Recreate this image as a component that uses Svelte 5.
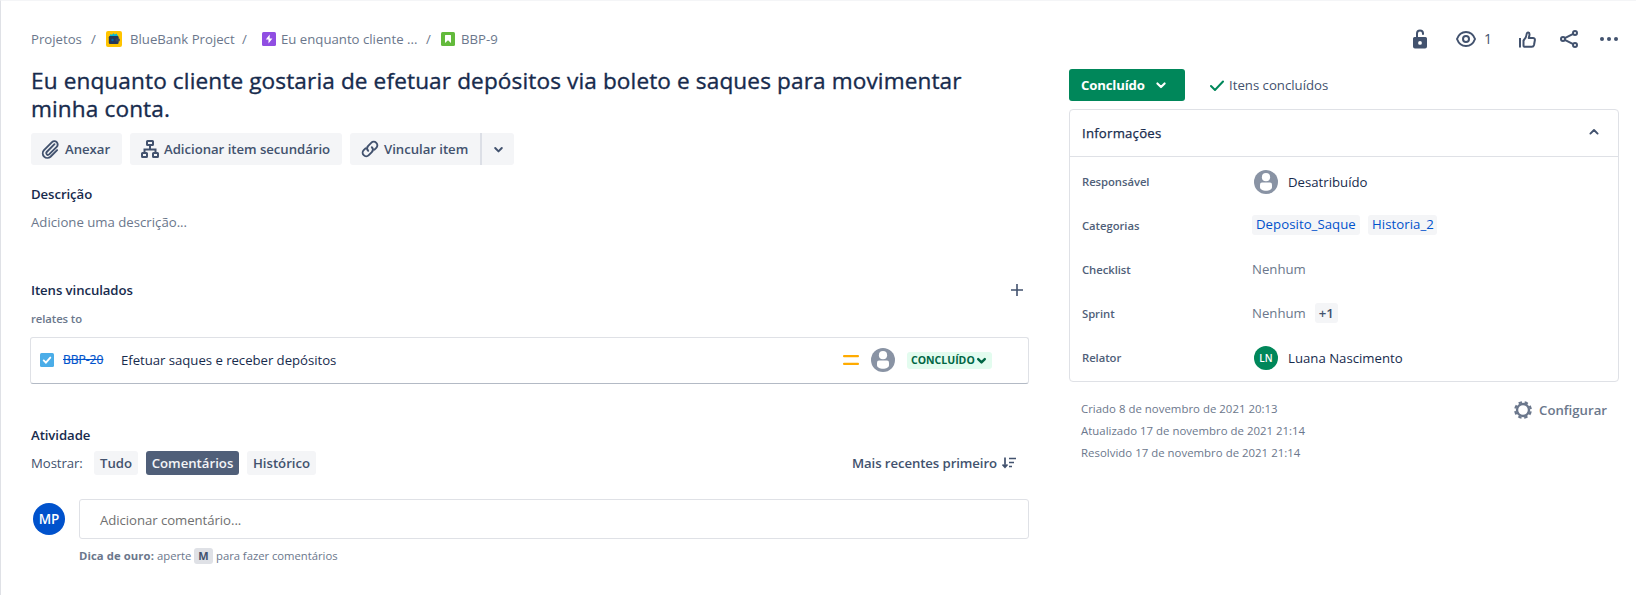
<script>
  const crumbs = ['Projetos', 'BlueBank Project', 'Eu enquanto cliente ...', 'BBP-9'];
  const dates = [
    'Criado 8 de novembro de 2021 20:13',
    'Atualizado 17 de novembro de 2021 21:14',
    'Resolvido 17 de novembro de 2021 21:14'
  ];
</script>

{#snippet person()}
  <svg class="person" width="24" height="24" viewBox="0 0 24 24">
    <circle cx="12" cy="12" r="12" fill="#8993a4" />
    <circle cx="12" cy="7.2" r="4.1" fill="#fff" />
    <path d="M8 12.500h8a2 2 0 0 1 2 2V17c0 2.600-2.800 3.800-6 3.800S6 19.600 6 17v-2.500a2 2 0 0 1 2-2z" fill="#fff" />
  </svg>
{/snippet}

{#snippet chevron(size, weight)}
  <svg width={size} height={size} viewBox="0 0 10 10" fill="none" stroke="currentColor" stroke-width={weight} stroke-linecap="round" stroke-linejoin="round">
    <path d="M2 3.700l3 3 3-3" />
  </svg>
{/snippet}

<div class="page">
  <main class="main">
    <nav class="crumbs">
      <span class="c1">{crumbs[0]}</span>
      <i class="s1">/</i>
      <svg width="16" height="16" viewBox="0 0 16 16">
        <rect width="16" height="16" rx="2" fill="#ffc400" />
        <path d="M3.500 5.500L4.500 3l1.500.8L7.500 2.200l1.300 1.300 1.700-1 1.800 3z" fill="#00b8d9" />
        <rect x="2.800" y="5" width="9.800" height="8" rx="1.200" fill="#253858" />
        <rect x="9.500" y="7.500" width="4.300" height="3" rx="1" fill="#344563" />
        <circle cx="6.500" cy="9" r="1.200" fill="#0065a8" />
      </svg>
      <span class="c2">{crumbs[1]}</span>
      <i class="s2">/</i>
      <svg width="14" height="14" viewBox="0 0 14 14">
        <rect width="14" height="14" rx="1.500" fill="#904ee2" />
        <path d="M7.700 2.600L3.800 7.600h2.700v3.800l3.900-5H7.700z" fill="#fff" />
      </svg>
      <span class="c3">{crumbs[2]}</span>
      <i class="s3">/</i>
      <svg width="14" height="14" viewBox="0 0 14 14">
        <rect width="14" height="14" rx="1.500" fill="#63ba3c" />
        <path d="M4.500 3h5a.5.5 0 0 1 .5.5V11L7 8.200 4 11V3.500a.5.5 0 0 1 .5-.5z" fill="#fff" />
      </svg>
      <span class="c4">{crumbs[3]}</span>
    </nav>

    <h1>Eu enquanto cliente gostaria de efetuar depósitos via boleto e saques para movimentar minha conta.</h1>

    <div class="actions">
      <button class="act a1">
        <svg width="18" height="20" viewBox="0 0 18 20" fill="none" stroke="currentColor" stroke-width="1.900" stroke-linecap="round">
          <path d="M13.500 5.200L5.700 13a1.700 1.700 0 0 0 2.400 2.400l7.600-7.600a3.300 3.300 0 0 0-4.700-4.700L3 11.200a4.600 4.600 0 0 0 6.500 6.500l6.600-6.600" />
        </svg>
        <span>Anexar</span>
      </button>
      <button class="act a2">
        <svg width="18" height="18" viewBox="0 0 18 18" fill="none" stroke="currentColor" stroke-width="2">
          <rect x="6" y="1" width="6" height="4" rx=".5" />
          <rect x="1" y="13" width="5" height="4" rx=".5" />
          <rect x="12" y="13" width="5" height="4" rx=".5" />
          <path d="M9 5v4M3.500 13V9.500h11V13" />
        </svg>
        <span>Adicionar item secundário</span>
      </button>
      <div class="split">
        <button class="act a3">
          <svg width="18" height="18" viewBox="0 0 18 18" fill="none" stroke="currentColor" stroke-width="1.900" stroke-linecap="round">
            <path d="M7.200 10.800a3.600 3.600 0 0 1 0-5l3-3a3.600 3.600 0 0 1 5.100 5.100l-1.800 1.800" />
            <path d="M10.800 7.200a3.600 3.600 0 0 1 0 5l-3 3a3.600 3.600 0 0 1-5.100-5.100l1.800-1.800" />
          </svg>
          <span>Vincular item</span>
        </button>
        <button class="act more">{@render chevron(11, 1.8)}</button>
      </div>
    </div>

    <h2 class="desc-h">Descrição</h2>
    <p class="desc">Adicione uma descrição...</p>

    <div class="linked-head">
      <h2>Itens vinculados</h2>
      <svg width="12" height="12" viewBox="0 0 12 12" stroke="#42526e" stroke-width="1.600"><path d="M6 0v12M0 6h12" /></svg>
    </div>
    <p class="rel">relates to</p>

    <div class="card">
      <svg width="14" height="14" viewBox="0 0 14 14">
        <rect width="14" height="14" rx="1.500" fill="#4bade8" />
        <path d="M3.700 7.400l2.200 2.200 4.400-5" fill="none" stroke="#fff" stroke-width="1.900" stroke-linecap="round" />
      </svg>
      <a class="key" href="#bbp-20">BBP-20</a>
      <span class="summary">Efetuar saques e receber depósitos</span>
      <svg width="16" height="10" viewBox="0 0 16 10">
        <rect y="0" width="16" height="2.300" rx="1" fill="#ffab00" />
        <rect y="7.700" width="16" height="2.300" rx="1" fill="#ffab00" />
      </svg>
      {@render person()}
      <span class="lozenge"><b>CONCLUÍDO</b>{@render chevron(11, 2.2)}</span>
    </div>

    <h2 class="act-h">Atividade</h2>
    <div class="filters">
      <span class="show">Mostrar:</span>
      <button class="f1">Tudo</button>
      <button class="f2 on">Comentários</button>
      <button class="f3">Histórico</button>
      <span class="sort">Mais recentes primeiro</span>
      <svg width="14" height="12" viewBox="0 0 14 12" fill="none" stroke="#42526e" stroke-width="1.700">
        <path d="M3 .5v9M.5 7.500L3 10.200l2.500-2.700M7 1.500h7M7 5.500h5M7 9.500h3" />
      </svg>
    </div>

    <div class="comment">
      <span class="me">MP</span>
      <div class="field"><span>Adicionar comentário...</span></div>
    </div>
    <p class="tip"><b>Dica de ouro:</b><span class="t1">aperte</span><kbd>M</kbd><span>para fazer comentários</span></p>
  </main>

  <aside>
    <div class="tools">
      <svg width="14" height="20" viewBox="0 0 14 20">
        <path d="M4 9V4.600a3 3 0 0 1 6 0V5" fill="none" stroke="#42526e" stroke-width="2" stroke-linecap="round" />
        <path fill-rule="evenodd" d="M1.500 8h11A1.500 1.500 0 0 1 14 9.500v8a2 2 0 0 1-2 2H2a2 2 0 0 1-2-2v-8A1.500 1.500 0 0 1 1.500 8zM7 12a1.900 1.900 0 1 0 0 3.800A1.900 1.900 0 0 0 7 12z" fill="#42526e" />
      </svg>
      <svg class="eye" width="20" height="16" viewBox="0 0 20 16" fill="none" stroke="#42526e" stroke-width="2">
        <path d="M1 8c1.600-4.300 5-7 9-7s7.400 2.700 9 7c-1.600 4.300-5 7-9 7s-7.400-2.700-9-7z" />
        <circle cx="10" cy="8" r="3" />
      </svg>
      <span class="n">1</span>
      <svg class="like" width="17" height="17" viewBox="0 0 17 17" fill="none" stroke="#42526e" stroke-width="2" stroke-linejoin="round">
        <path d="M1 7v9.500" />
        <path d="M4.500 14.500V9.500C6.500 7.500 7.500 5.500 7.800 2.500c.1-1.400 2.700-1.300 2.700.8 0 1.500-.4 2.500-.8 3.700h4.300c1.400 0 2 1 1.900 2l-.9 5c-.3 1.200-1 1.800-2.200 1.800H6.200c-1 0-1.700-.5-1.700-1.300z" />
      </svg>
      <svg class="share" width="18" height="18" viewBox="0 0 18 18" fill="none" stroke="#42526e" stroke-width="2">
        <circle cx="3" cy="9" r="2" /><circle cx="15" cy="3" r="2" /><circle cx="15" cy="15" r="2" />
        <path d="M4.800 8.100L13.200 3.900M4.800 9.900l8.400 4.200" />
      </svg>
      <svg class="dots" width="18" height="4" viewBox="0 0 18 4" fill="#42526e">
        <circle cx="2" cy="2" r="2" /><circle cx="9" cy="2" r="2" /><circle cx="16" cy="2" r="2" />
      </svg>
    </div>

    <div class="status">
      <button class="done"><span>Concluído</span>{@render chevron(12, 1.8)}</button>
      <svg class="tick" width="14" height="11" viewBox="0 0 14 11" fill="none" stroke="#00875a" stroke-width="2" stroke-linecap="round"><path d="M1 6l4 4 8-8.500" /></svg>
      <span class="res">Itens concluídos</span>
    </div>

    <section class="panel">
      <header><span>Informações</span><i class="up">{@render chevron(12, 1.6)}</i></header>
      <dl>
        <dt>Responsável</dt>
        <dd class="user">{@render person()}<span>Desatribuído</span></dd>
        <dt>Categorias</dt>
        <dd class="tags"><a class="g1" href="#dep">Deposito_Saque</a><a class="g2" href="#his">Historia_2</a></dd>
        <dt>Checklist</dt>
        <dd class="muted">Nenhum</dd>
        <dt>Sprint</dt>
        <dd class="muted">Nenhum<b class="chip">+1</b></dd>
        <dt>Relator</dt>
        <dd class="user"><span class="ln">LN</span><span>Luana Nascimento</span></dd>
      </dl>
    </section>

    <footer>
      <div class="dates">
        {#each dates as d}<p>{d}</p>{/each}
      </div>
      <div class="config">
        <svg width="18" height="18" viewBox="0 0 18 18" fill="none" stroke="#6b778c">
          <circle cx="9" cy="9" r="6" stroke-width="2.400" />
          <circle cx="9" cy="9" r="7.800" stroke-width="2.200" stroke-dasharray="3.400 2.726" stroke-dashoffset="-1.400" />
        </svg>
        <span>Configurar</span>
      </div>
    </footer>
  </aside>
</div>

<style>
  :global(body) { background: #fff; }
  .page {
    box-sizing: border-box; width: 1636px; height: 595px; display: flex; overflow: hidden;
    border-left: 1px solid #dfe1e6; border-top: 1px solid #f4f5f7; background: #fff;
    font-family: "Open Sans", "Noto Sans", sans-serif; font-size: 13.2px; line-height: 20px; color: #172b4d;
  }
  .page * { box-sizing: border-box; }
  svg { display: block; flex: none; }
  h1, h2, p, dl, dd, dt { margin: 0; }
  span, b, a, h2, p, dt { white-space: nowrap; }
  i { font-style: normal; }
  button { border: 0; font: inherit; padding: 0; display: flex; align-items: center; text-align: left; }
  .main { width: 999px; margin-left: 30px; padding-top: 26px; flex: none; }

  .crumbs { display: flex; align-items: center; height: 24px; color: #6b778c; }
  .c1 { width: 60px; }
  .s1 { width: 15px; }
  .c2 { width: 112px; margin-left: 8px; }
  .s2 { width: 20px; }
  .c3 { width: 145px; margin-left: 5px; }
  .s3 { width: 15px; }
  .c4 { margin-left: 6px; }

  h1 {
    width: 960px; margin-top: 16px; font-size: 22.600px; line-height: 28px; font-weight: 500;
    letter-spacing: .12px; -webkit-text-stroke: .35px #172b4d;
  }

  .actions { display: flex; gap: 8px; margin-top: 10px; font-weight: 600; color: #42526e; }
  .act { height: 32px; background: #f4f5f7; color: #42526e; border-radius: 3px; letter-spacing: -.04px; }
  .a1 { width: 91px; padding-left: 10px; }
  .a1 span { margin-left: 6px; }
  .a2 { width: 212px; padding-left: 11px; }
  .a2 span { margin-left: 5px; }
  .a3 { width: 130px; padding-left: 11px; border-radius: 3px 0 0 3px; }
  .a3 span { margin-left: 5px; }
  .split { display: flex; }
  .more { width: 34px; justify-content: center; border-left: 2px solid #dcdfe6; border-radius: 0 3px 3px 0; }

  h2 { font-size: 13.2px; line-height: 20px; font-weight: 600; letter-spacing: -.08px; }
  .desc-h { margin-top: 19px; }
  .desc { margin-top: 8px; color: #6b778c; }
  .linked-head { display: flex; justify-content: space-between; align-items: center; margin-top: 48px; padding-right: 7px; }
  .rel { margin-top: 9px; font-size: 11.300px; font-weight: 600; color: #6b778c; letter-spacing: -.08px; }

  .card {
    margin: 8px 0 0 -1px; width: 999px; height: 47px; padding: 0 0 1px 9px; display: flex; align-items: center;
    border: 1px solid #dfe1e6; border-bottom-color: #b3bac5; border-radius: 3px;
  }
  .key { width: 49px; margin-left: 9px; color: #0052cc; text-decoration: line-through; font-size: 12px; -webkit-text-stroke: .2px #0052cc; }
  .summary { width: 722px; margin-left: 9px; letter-spacing: -.04px; }
  .card .person { margin-left: 12px; }
  .lozenge {
    display: flex; align-items: center; width: 85px; height: 17px; margin-left: 12px; padding-left: 4px;
    border-radius: 3px; background: #e3fcef; color: #006644; font-size: 10.500px;
  }
  .lozenge b { width: 65px; }

  .act-h { margin-top: 41px; }
  .filters { display: flex; align-items: center; height: 24px; margin-top: 6px; }
  .show { width: 63px; color: #42526e; letter-spacing: -.08px; }
  .filters button { height: 24px; border-radius: 3px; background: #f4f5f7; color: #42526e; font-weight: 600; justify-content: center; }
  .f1 { width: 44px; }
  .f2 { width: 93px; margin-left: 8px; }
  .f3 { width: 69px; margin-left: 8px; }
  .filters .on { background: #505f79; color: #f4f5f7; }
  .sort { width: 150px; margin-left: 536px; font-weight: 600; color: #42526e; letter-spacing: -.09px; }

  .comment { display: flex; margin-top: 24px; height: 40px; align-items: center; }
  .me {
    width: 32px; height: 32px; margin: 0 14px 0 2px; border-radius: 50%; background: #0052cc; color: #fff;
    line-height: 32px; text-align: center; font-weight: 600; font-size: 13.500px;
  }
  .field { width: 950px; height: 40px; padding: 10px 0 0 20px; border: 1px solid #dfe1e6; border-radius: 3px; color: #707070; letter-spacing: -.06px; }
  .tip { display: flex; align-items: center; margin-top: 7px; margin-left: 48px; font-size: 11.300px; color: #6b778c; letter-spacing: -.03px; }
  .tip b { width: 78px; letter-spacing: .08px; }
  .t1 { width: 37px; }
  kbd {
    width: 19px; height: 16px; margin-right: 3px; border-radius: 3px; background: #dfe1e6; color: #42526e;
    font: 700 11px/16px "Open Sans", sans-serif; text-align: center;
  }

  aside { width: 550px; margin-left: 39px; padding-top: 26px; }
  .tools { display: flex; align-items: center; height: 24px; padding-left: 344px; color: #42526e; }
  .eye { margin-left: 29px; }
  .n { width: 7px; margin-left: 8px; font-size: 14px; }
  .like { margin-left: 28px; }
  .share { margin-left: 24px; }
  .dots { margin-left: 22px; }

  .status { display: flex; align-items: center; margin-top: 18px; }
  .done { width: 116px; height: 32px; padding-left: 12px; border-radius: 3px; background: #00875a; color: #fff; font-weight: 700; }
  .done span { width: 74px; letter-spacing: -.18px; }
  .tick { margin-left: 25px; }
  .res { margin-left: 5px; color: #42526e; }

  .panel { height: 273px; margin-top: 8px; border: 1px solid #dfe1e6; border-radius: 4px; }
  header { display: flex; justify-content: space-between; height: 47px; padding: 13px 18px 0 12px; border-bottom: 1px solid #dfe1e6; }
  header span { letter-spacing: .22px; -webkit-text-stroke: .25px #172b4d; }
  .up { transform: rotate(180deg); height: 12px; margin-top: 3px; color: #42526e; }
  dl { display: grid; grid-template-columns: 170px 1fr; grid-auto-rows: 44px; padding: 3px 0 0 12px; align-items: center; }
  dt { font-size: 11.300px; font-weight: 600; color: #505f79; letter-spacing: -.06px; }
  dd { display: flex; align-items: center; }
  .user { padding-left: 2px; }
  .user > span:last-child { margin-left: 10px; }
  .tags { padding-bottom: 2px; }
  .tags a { height: 20px; padding: 0 4px; line-height: 18px; background: #f4f5f7; border-radius: 3px; color: #0052cc; text-decoration: none; letter-spacing: .05px; }
  .g1 { width: 108px; }
  .g2 { width: 69px; margin-left: 8px; }
  .muted { color: #6b778c; padding-bottom: 2px; }
  .chip { width: 23px; height: 20px; margin-left: 9px; border-radius: 3px; background: #f4f5f7; color: #42526e; font-weight: 600; text-align: center; }
  .ln { width: 24px; height: 24px; border-radius: 50%; background: #00875a; color: #fff; font-size: 10px; line-height: 24px; font-weight: 600; text-align: center; }

  footer { display: flex; justify-content: space-between; padding: 16px 12px 0; color: #6b778c; }
  .dates { font-size: 11.400px; line-height: 22px; letter-spacing: .02px; }
  .config { display: flex; height: 24px; align-items: center; font-weight: 600; }
  .config span { margin-left: 7px; }
</style>
